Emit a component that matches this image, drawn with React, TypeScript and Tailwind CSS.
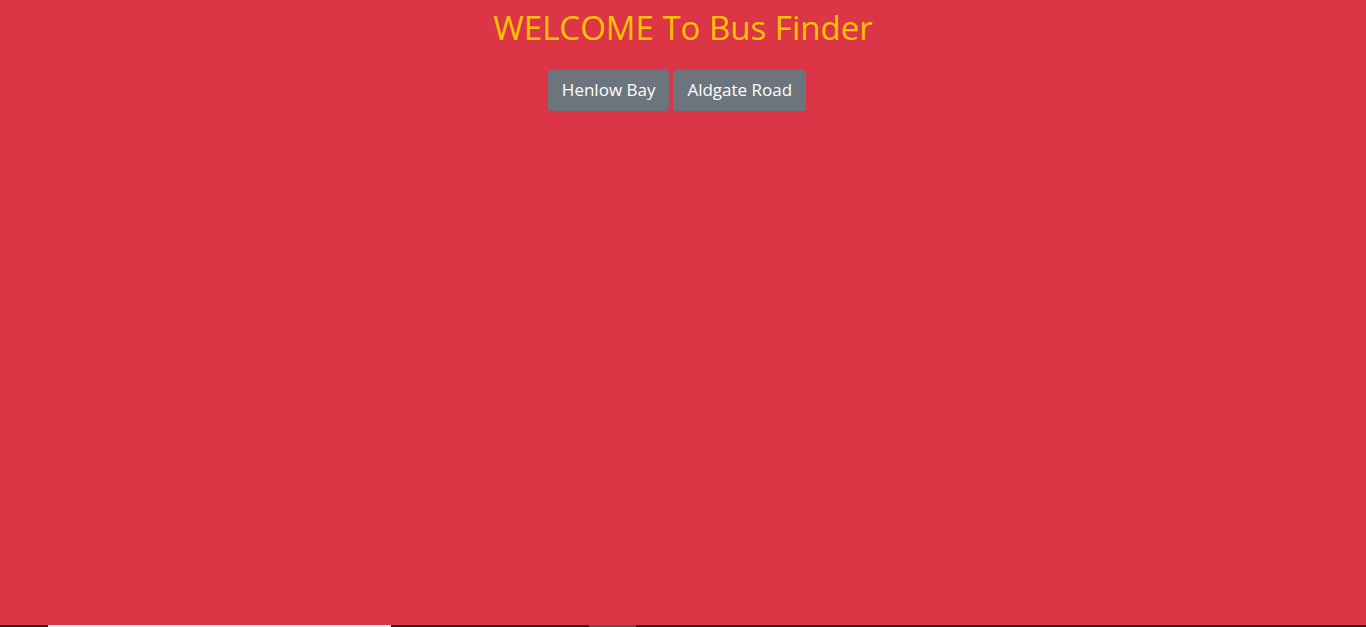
export default function App() {
  const stops = ["Henlow Bay", "Aldgate Road"]

  return (
    <div className="flex h-[627px] flex-col font-['Open_Sans',sans-serif]">
      <div className="flex h-[625px] flex-col items-center bg-[#dc3545]">
        <h1 className="mt-[8px] text-[33px] leading-[1.2] text-[#ffc107]">WELCOME To Bus Finder</h1>
        <div className="mt-[22px] mr-[12px] flex gap-[4px]">
          {stops.map((stop) => (
            <button
              key={stop}
              type="button"
              className="h-[41px] rounded-[4px] bg-[#6c757d] px-[14px] text-[17px] text-white"
            >
              {stop}
            </button>
          ))}
        </div>
      </div>
      <div className="flex h-[2px] bg-[#1f1f1f]">
        <div className="ml-[48px] w-[343px] bg-[#f0f0f0]" />
        <div className="ml-[198px] w-[47px] bg-[#555]" />
      </div>
    </div>
  )
}
